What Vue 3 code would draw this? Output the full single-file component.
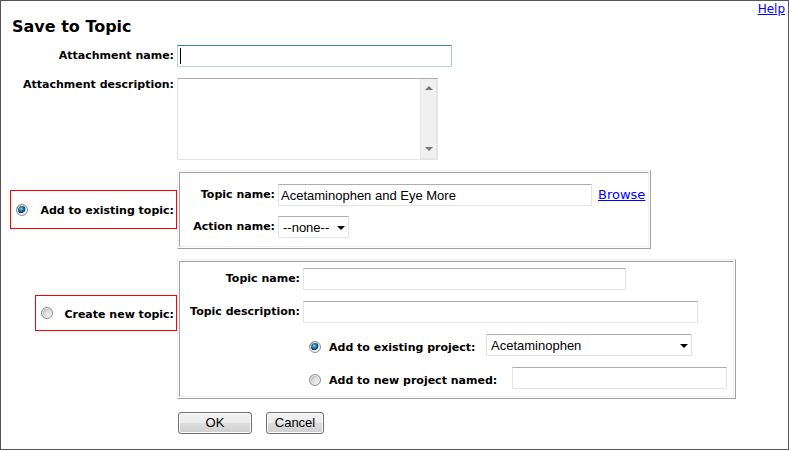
<script setup>
import { ref } from 'vue'

const attachmentName = ref('')
const attachmentDescription = ref('')
const target = ref('existing')
const existingTopic = ref('Acetaminophen and Eye More')
const action = ref('none')
const newTopic = ref('')
const newDescription = ref('')
const projectMode = ref('existing')
const project = ref('acetaminophen')
const newProject = ref('')
</script>

<template>
  <main class="page">
    <a class="link help" href="#help">Help</a>
    <h1 class="title">Save to Topic</h1>

    <form class="form" @submit.prevent>
      <label class="label" for="att-name">Attachment name:</label>
      <div class="focus-field">
        <input id="att-name" v-model="attachmentName" class="field focused wide" type="text" />
        <span class="caret" aria-hidden="true"></span>
      </div>

      <label class="label top" for="att-desc">Attachment description:</label>
      <div class="area">
        <textarea id="att-desc" v-model="attachmentDescription" class="area-text"></textarea>
        <div class="scrollbar" aria-hidden="true">
          <svg width="8" height="4" viewBox="0 0 8 4"><path d="M0 4L4 0L8 4Z" fill="#777" /></svg>
          <svg width="8" height="4" viewBox="0 0 8 4"><path d="M0 0H8L4 4Z" fill="#777" /></svg>
        </div>
      </div>

      <label class="choice tall">
        <input v-model="target" class="radio" type="radio" name="target" value="existing" />
        <span>Add to existing topic:</span>
      </label>
      <div class="panel">
        <div class="cell existing">
          <label class="label" for="topic">Topic name:</label>
          <div class="line">
            <input id="topic" v-model="existingTopic" class="field topic" type="text" />
            <a class="link" href="#browse">Browse</a>
          </div>
          <label class="label" for="action">Action name:</label>
          <div class="select action">
            <select id="action" v-model="action" class="field">
              <option value="none">--none--</option>
            </select>
            <svg class="arrow" width="8" height="4" viewBox="0 0 8 4"><path d="M0 0H8L4 4Z" /></svg>
          </div>
        </div>
      </div>

      <label class="choice create">
        <input v-model="target" class="radio" type="radio" name="target" value="new" />
        <span>Create new topic:</span>
      </label>
      <div class="panel">
        <div class="cell new">
          <label class="label" for="new-topic">Topic name:</label>
          <input id="new-topic" v-model="newTopic" class="field new-name" type="text" />
          <label class="label" for="new-desc">Topic description:</label>
          <input id="new-desc" v-model="newDescription" class="field new-desc" type="text" />
          <div class="project">
            <label class="option">
              <input v-model="projectMode" class="radio" type="radio" name="project" value="existing" />
              <span>Add to existing project:</span>
            </label>
            <div class="select project-select">
              <select v-model="project" class="field" aria-label="Project">
                <option value="acetaminophen">Acetaminophen</option>
              </select>
              <svg class="arrow" width="8" height="4" viewBox="0 0 8 4"><path d="M0 0H8L4 4Z" /></svg>
            </div>
          </div>
          <div class="project named">
            <label class="option">
              <input v-model="projectMode" class="radio" type="radio" name="project" value="new" />
              <span>Add to new project named:</span>
            </label>
            <input v-model="newProject" class="field project-name" type="text" aria-label="New project name" />
          </div>
        </div>
      </div>

      <div class="buttons">
        <button class="btn ok" type="submit">OK</button>
        <button class="btn" type="button">Cancel</button>
      </div>
    </form>
  </main>
</template>

<style>
body {
  margin: 0;
  background: #fff;
}
</style>

<style scoped>
.page {
  box-sizing: border-box;
  min-height: 100vh;
  display: flex;
  flex-direction: column;
  padding: 0 3px 12px 0;
  border: 1px solid #555;
  color: #000;
  font: bold 11px/22px Verdana, "DejaVu Sans", sans-serif;
}
.link {
  color: #00f;
  font-size: 13px;
  font-weight: normal;
  text-decoration: underline;
}
.help {
  align-self: flex-end;
  font-size: 12px;
  line-height: 16px;
}
.title {
  margin: 0 0 8px;
  padding-left: 11px;
  font-size: 16px;
  line-height: 20px;
}
.form {
  display: grid;
  grid-template-columns: 176px 1fr;
  row-gap: 10px;
}
.label {
  padding-right: 3px;
  text-align: right;
  white-space: nowrap;
}
.label.top {
  line-height: 14px;
}
.field {
  box-sizing: border-box;
  height: 22px;
  max-width: 100%;
  margin: 0;
  padding: 0 2px;
  border: 1px solid #e2e3ea;
  border-top-color: #abadb3;
  border-radius: 1px;
  outline: none;
  background: #fff;
  color: #000;
  font: 13px "Liberation Sans", Arial, sans-serif;
}
.field.focused {
  border-color: #3d7bad #a4c9e3 #b7d9ed #b5cfe7;
}
.wide {
  width: 275px;
}
.focus-field {
  position: relative;
  display: flex;
  padding-bottom: 1px;
}
.caret {
  position: absolute;
  top: 3px;
  left: 3px;
  width: 1px;
  height: 16px;
  background: #000;
}
.area {
  box-sizing: border-box;
  display: flex;
  width: 261px;
  height: 82px;
  border: 1px solid #e2e3ea;
  border-top-color: #abadb3;
}
.area-text {
  flex: 1;
  min-width: 0;
  padding: 2px;
  border: 0;
  outline: none;
  resize: none;
  overflow: hidden;
  font: 13px "Liberation Sans", Arial, sans-serif;
}
.scrollbar {
  box-sizing: border-box;
  width: 17px;
  display: flex;
  flex-direction: column;
  align-items: center;
  justify-content: space-between;
  padding: 7px 0;
  border: 1px solid #e6e6e8;
  border-top: 0;
  background: #f0f0f0;
}
.choice {
  box-sizing: border-box;
  display: flex;
  align-items: center;
  justify-content: space-between;
  justify-self: end;
  gap: 8px;
  padding: 0 2px 0 5px;
  border: 1px solid #f00;
  white-space: nowrap;
}
.choice.tall {
  min-width: 167px;
  height: 39px;
  align-self: center;
}
.choice.create {
  min-width: 142px;
  height: 36px;
  align-self: start;
  margin-top: 36px;
}
.choice span {
  padding-top: 3px;
}
.radio {
  appearance: none;
  box-sizing: border-box;
  flex: none;
  width: 12px;
  height: 12px;
  margin: 0;
  border: 1px solid #8e8f8f;
  border-radius: 50%;
  background: radial-gradient(circle at 65% 65%, #f4f4f4 0, #d8dadc 45%, #b9bdc1 60%);
  box-shadow: inset 0 0 0 1px #f4f4f4;
}
.radio:checked {
  background: radial-gradient(circle at 42% 38%, #8fe0fa 0, #2a88b4 20%, #0d3a5c 48%, #dfe3e6 52%);
}
.panel {
  justify-self: start;
  max-width: 100%;
  padding: 1px;
  border: 1px solid;
  border-color: #f0f0f0 #a0a0a0 #a0a0a0 #f0f0f0;
}
.cell {
  display: grid;
  border: 1px solid;
  border-color: #a0a0a0 #f0f0f0 #f0f0f0 #a0a0a0;
}
.existing {
  grid-template-columns: 98px auto;
  row-gap: 10px;
  padding: 11px 3px 8px 0;
}
.line {
  display: flex;
  gap: 6px;
}
.topic {
  width: 314px;
}
.select {
  position: relative;
}
.select .field {
  appearance: none;
  width: 100%;
  padding: 0 4px;
  display: block;
}
.action {
  width: 71px;
}
.arrow {
  position: absolute;
  top: 10px;
  right: 4px;
  pointer-events: none;
}
.new {
  grid-template-columns: 123px auto;
  row-gap: 11px;
  padding: 6px 6px 7px 0;
}
.new-name {
  width: 323px;
}
.new-desc {
  width: 395px;
}
.project {
  grid-column: 2;
  display: flex;
  gap: 4px;
  padding-left: 6px;
}
.named {
  gap: 8px;
}
.option {
  display: flex;
  align-items: center;
  gap: 8px;
  min-width: 173px;
  height: 26px;
  margin-bottom: -4px;
  white-space: nowrap;
}
.named .option {
  min-width: 195px;
}
.option span {
  padding-top: 2px;
}
.project-select {
  width: 206px;
}
.project-name {
  width: 215px;
}
.buttons {
  grid-column: 2;
  display: flex;
  gap: 14px;
  padding: 3px 0 0 1px;
}
.btn {
  box-sizing: border-box;
  min-width: 58px;
  height: 22px;
  padding: 0 7px;
  border: 1px solid #707070;
  border-radius: 3px;
  background: linear-gradient(#f2f2f2 0, #ebebeb 48%, #dddddd 52%, #cfcfcf 100%);
  box-shadow: inset 0 0 0 1px #fafafa;
  color: #000;
  font: 13px/18px "Liberation Sans", Arial, sans-serif;
}
.btn.ok {
  min-width: 74px;
}
</style>
